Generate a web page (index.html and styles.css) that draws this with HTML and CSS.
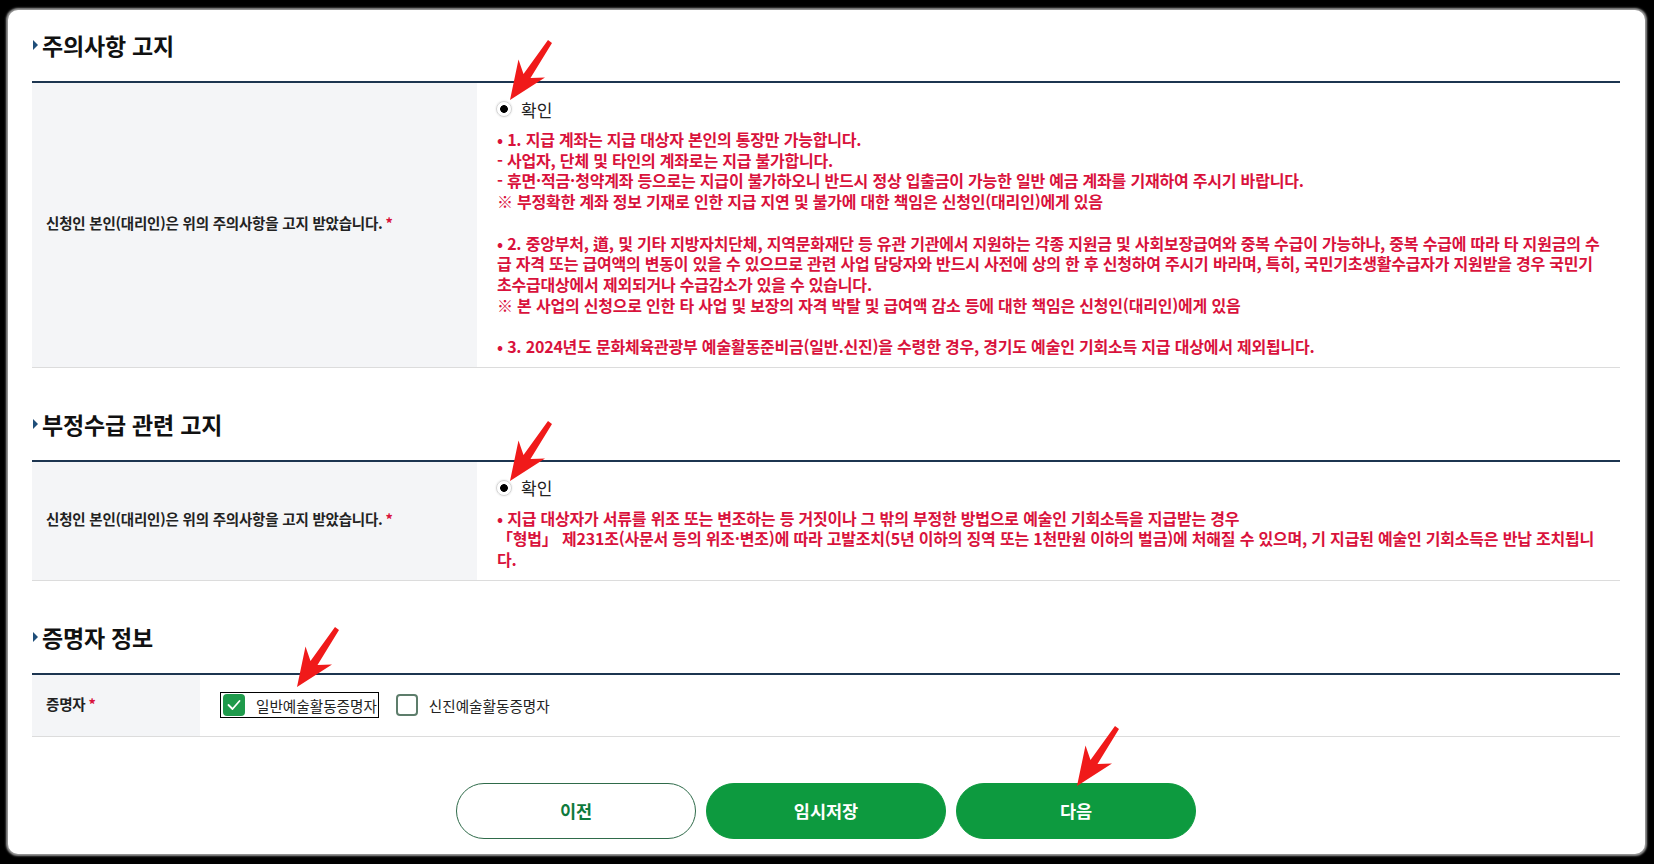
FILE: index.html
```html
<!DOCTYPE html>
<html lang="ko">
<head>
    <meta charset="UTF-8">
    <meta name="viewport" content="width=device-width, initial-scale=1.0">
    <title>예술인 기회소득 신청</title>
    <link rel="stylesheet" href="styles.css">
</head>
<body>
    <div class="page">
        <h2 class="section-title">주의사항 고지</h2>
        <div class="form-table">
            <div class="form-row">
                <div class="form-label">신청인 본인(대리인)은 위의 주의사항을 고지 받았습니다. <span class="req">*</span></div>
                <div class="form-field">
                    <label class="radio-item"><input type="radio" name="notice1" checked> 확인</label>
                    <div class="notice">
                        <p>• 1. 지급 계좌는 지급 대상자 본인의 통장만 가능합니다.<br>
                        - 사업자, 단체 및 타인의 계좌로는 지급 불가합니다.<br>
                        - 휴면·적금·청약계좌 등으로는 지급이 불가하오니 반드시 정상 입출금이 가능한 일반 예금 계좌를 기재하여 주시기 바랍니다.<br>
                        ※ 부정확한 계좌 정보 기재로 인한 지급 지연 및 불가에 대한 책임은 신청인(대리인)에게 있음</p>
                        <p>• 2. 중앙부처, 道, 및 기타 지방자치단체, 지역문화재단 등 유관 기관에서 지원하는 각종 지원금 및 사회보장급여와 중복 수급이 가능하나, 중복 수급에 따라 타 지원금의 수<br>급 자격 또는 급여액의 변동이 있을 수 있으므로 관련 사업 담당자와 반드시 사전에 상의 한 후 신청하여 주시기 바라며, 특히, 국민기초생활수급자가 지원받을 경우 국민기<br>초수급대상에서 제외되거나 수급감소가 있을 수 있습니다.<br>
                        ※ 본 사업의 신청으로 인한 타 사업 및 보장의 자격 박탈 및 급여액 감소 등에 대한 책임은 신청인(대리인)에게 있음</p>
                        <p>• 3. 2024년도 문화체육관광부 예술활동준비금(일반.신진)을 수령한 경우, 경기도 예술인 기회소득 지급 대상에서 제외됩니다.</p>
                    </div>
                </div>
            </div>
        </div>

        <h2 class="section-title">부정수급 관련 고지</h2>
        <div class="form-table">
            <div class="form-row">
                <div class="form-label">신청인 본인(대리인)은 위의 주의사항을 고지 받았습니다. <span class="req">*</span></div>
                <div class="form-field">
                    <label class="radio-item"><input type="radio" name="notice2" checked> 확인</label>
                    <div class="notice">
                        <p>• 지급 대상자가 서류를 위조 또는 변조하는 등 거짓이나 그 밖의 부정한 방법으로 예술인 기회소득을 지급받는 경우<br>
                        「형법」 제231조(사문서 등의 위조·변조)에 따라 고발조치(5년 이하의 징역 또는 1천만원 이하의 벌금)에 처해질 수 있으며, 기 지급된 예술인 기회소득은 반납 조치됩니<br>다.</p>
                    </div>
                </div>
            </div>
        </div>

        <h2 class="section-title">증명자 정보</h2>
        <div class="form-table">
            <div class="form-row form-row--short">
                <div class="form-label">증명자 <span class="req">*</span></div>
                <div class="form-field form-field--inline">
                    <label class="check-item is-focused">
                        <span class="check-box is-checked">
                            <svg width="22" height="22" viewBox="0 0 22 22"><polyline points="5.5,11 9.5,15 16.5,7" fill="none" stroke="#fff" stroke-width="1.8" stroke-linecap="round" stroke-linejoin="round"/></svg>
                        </span>
                        일반예술활동증명자
                    </label>
                    <label class="check-item">
                        <span class="check-box"></span>
                        신진예술활동증명자
                    </label>
                </div>
            </div>
        </div>

        <div class="btn-group">
            <button type="button" class="btn btn-line">이전</button>
            <button type="button" class="btn btn-green">임시저장</button>
            <button type="button" class="btn btn-green">다음</button>
        </div>

        <!-- annotation arrows -->
        <svg class="arrow arrow-1" width="50" height="70" viewBox="0 0 50 70"><polygon points="44,10 22.5,45 37,44.5 2,67 10.5,26.5 15.5,41 40,7"/></svg>
        <svg class="arrow arrow-2" width="50" height="70" viewBox="0 0 50 70"><polygon points="44,10 22.5,45 37,44.5 2,67 10.5,26.5 15.5,41 40,7"/></svg>
        <svg class="arrow arrow-3" width="50" height="70" viewBox="0 0 50 70"><polygon points="44,10 22.5,45 37,44.5 2,67 10.5,26.5 15.5,41 40,7"/></svg>
        <svg class="arrow arrow-4" width="50" height="70" viewBox="0 0 50 70"><polygon points="44,10 22.5,45 37,44.5 2,67 10.5,26.5 15.5,41 40,7"/></svg>
    </div>
</body>
</html>
```

FILE: styles.css
```css
:root {
    --navy: #1c3550;
    --red: #d9123c;
    --green: #0d9a3f;
    --label-bg: #f4f5f7;
    --line: #dcdcdc;
}

* {
    margin: 0;
    padding: 0;
    box-sizing: border-box;
}

html, body {
    height: 100%;
}

body {
    background: #000;
    padding: 10px 9px 10px 8px;
    font-family: "Noto Sans CJK KR", "Noto Sans", sans-serif;
    color: #222;
}

.page {
    position: relative;
    height: 100%;
    background: #fff;
    border-radius: 10px;
    box-shadow: 0 0 2px 2px #9a9a9a;
    padding: 19px 25px 14px 24px;
}

/* section title */
.section-title {
    position: relative;
    font-size: 23px;
    font-weight: 700;
    line-height: 32px;
    letter-spacing: -0.2px;
    color: #111;
    padding-left: 10px;
    margin: 0 0 20px;
}

.section-title::before {
    content: "";
    position: absolute;
    left: 1px;
    top: 11px;
    border-left: 5px solid #1f4e79;
    border-top: 5px solid transparent;
    border-bottom: 5px solid transparent;
}

.form-table + .section-title {
    margin-top: 40px;
}

/* form table */
.form-table {
    border-top: 2px solid var(--navy);
}

.form-row {
    display: grid;
    grid-template-columns: 445px 1fr;
    border-bottom: 1px solid var(--line);
}

.form-row--short {
    grid-template-columns: 168px 1fr;
    height: 62px;
}

.form-label {
    display: flex;
    align-items: center;
    background: var(--label-bg);
    padding: 0 14px 4px;
    font-size: 14.5px;
    font-weight: 700;
    letter-spacing: -0.2px;
    color: #222;
}

.req {
    color: var(--red);
    margin-left: 3px;
}

.form-field {
    padding: 14px 8px 10px 20px;
}

.form-field--inline {
    display: flex;
    align-items: center;
    gap: 14px;
    padding: 0 18px 0 20px;
}

/* radio */
.radio-item {
    display: flex;
    align-items: center;
    gap: 9px;
    height: 24px;
    font-size: 17px;
    color: #222;
    margin-left: -1px;
}

.radio-item input {
    appearance: none;
    -webkit-appearance: none;
    width: 16px;
    height: 16px;
    margin: 0;
    border-radius: 50%;
    border: 1px solid #d5d5d5;
    background: radial-gradient(circle, #000 0 3.5px, #fff 4.2px);
    box-shadow: 0 0 2px rgba(0,0,0,0.15);
}

/* notice text */
.notice {
    margin-top: 8px;
    font-size: 16px;
    font-weight: 700;
    line-height: 20.7px;
    letter-spacing: -0.2px;
    color: var(--red);
}

.notice p + p {
    margin-top: 20.7px;
}

/* checkbox */
.check-item {
    display: flex;
    align-items: center;
    gap: 11px;
    font-size: 14.6px;
    color: #222;
    padding: 1px 1px 1px 2px;
    border: 1px solid transparent;
}

.check-item.is-focused {
    border-color: #000;
}

.check-box {
    display: block;
    width: 22px;
    height: 22px;
    border: 2px solid #5d7d6b;
    border-radius: 4px;
    background: #fff;
}

.check-box.is-checked {
    border: none;
    background: #1e9a4b;
}

.check-box svg {
    display: block;
    width: 22px;
    height: 22px;
}

/* buttons */
.btn-group {
    display: flex;
    justify-content: center;
    gap: 10px;
    margin-top: 46px;
}

.btn {
    width: 240px;
    height: 56px;
    border-radius: 28px;
    font-family: inherit;
    font-size: 17.5px;
    font-weight: 700;
    cursor: pointer;
}

.btn-line {
    background: #fff;
    border: 1px solid #2f6b4a;
    color: #0e7a3c;
}

.btn-green {
    background: var(--green);
    border: 1px solid var(--green);
    color: #fff;
}

/* red annotation arrows */
.arrow {
    position: absolute;
    fill: #f01a1a;
}

.arrow-1 { left: 500px; top: 23px; }
.arrow-2 { left: 500px; top: 404px; }
.arrow-3 { left: 287px; top: 610px; }
.arrow-4 { left: 1067px; top: 709px; }
```
